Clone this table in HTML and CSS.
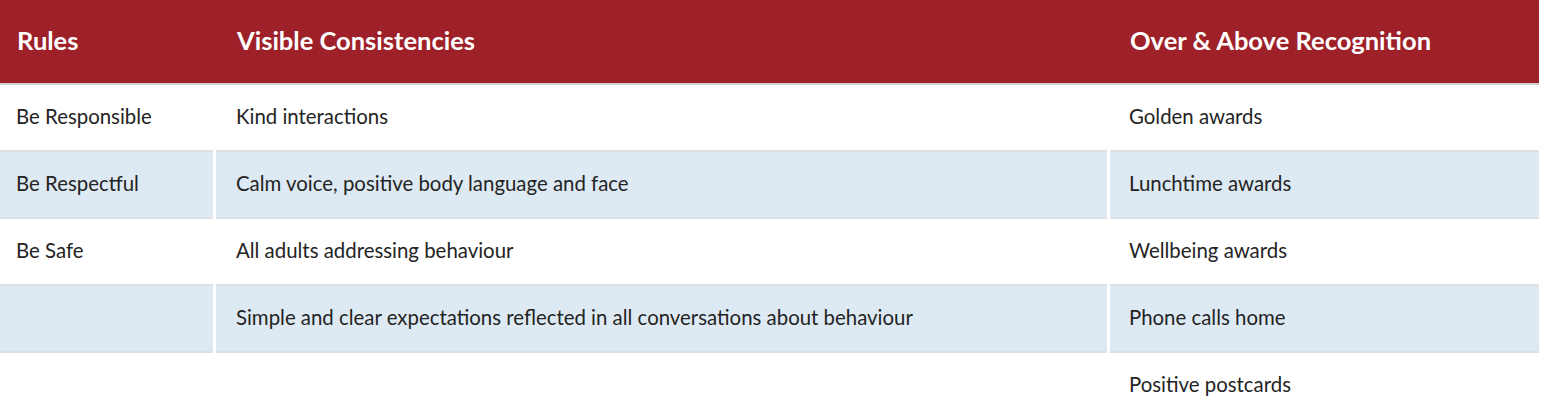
FILE: index.html
```html
<!DOCTYPE html>
<html lang="en">
<head>
<meta charset="utf-8">
<title>Rules</title>
<link rel="stylesheet" href="styles.css">
</head>
<body>
<div class="table">
  <div class="row head">
    <div class="cell c1">Rules</div>
    <div class="cell c2">Visible Consistencies</div>
    <div class="cell c3">Over &amp; Above Recognition</div>
  </div>
  <div class="row">
    <div class="cell c1">Be Responsible</div>
    <div class="cell c2">Kind interactions</div>
    <div class="cell c3">Golden awards</div>
  </div>
  <div class="row alt">
    <div class="cell c1">Be Respectful</div>
    <div class="cell c2">Calm voice, positive body language and face</div>
    <div class="cell c3">Lunchtime awards</div>
  </div>
  <div class="row">
    <div class="cell c1">Be Safe</div>
    <div class="cell c2">All adults addressing behaviour</div>
    <div class="cell c3">Wellbeing awards</div>
  </div>
  <div class="row alt">
    <div class="cell c1"></div>
    <div class="cell c2">Simple and clear expectations reflected in all conversations about behaviour</div>
    <div class="cell c3">Phone calls home</div>
  </div>
  <div class="row">
    <div class="cell c1"></div>
    <div class="cell c2"></div>
    <div class="cell c3">Positive postcards</div>
  </div>
</div>
</body>
</html>
```

FILE: styles.css
```css
html, body {
  margin: 0;
  padding: 0;
  background: #ffffff;
}
body {
  font-family: Lato, "Open Sans", sans-serif;
  color: #242424;
}
.table {
  width: 1539px;
}
.row {
  display: grid;
  grid-template-columns: 213px 891px 429px;
  column-gap: 3px;
}
.cell {
  box-sizing: border-box;
  height: 67px;
  padding-bottom: 3px;
  display: flex;
  align-items: center;
  padding-left: 20px;
  font-size: 20.4px;
  border-bottom: 2px solid #dde1e5;
}
.cell.c1 {
  padding-left: 16px;
}
.cell.c3 {
  padding-left: 19px;
}
.alt .cell {
  background: #deeaf3;
}
.head {
  background: #9e2129;
  border-bottom: 2px solid #cfcfcf;
}
.head .cell {
  height: 83px;
  padding-bottom: 4px;
  border-bottom: none;
  color: #ffffff;
  font-weight: 700;
  font-size: 25.5px;
}
.head .c1 {
  padding-left: 17px;
}
.head .c2 {
  padding-left: 21px;
}
.head .c3 {
  padding-left: 20px;
}
```
